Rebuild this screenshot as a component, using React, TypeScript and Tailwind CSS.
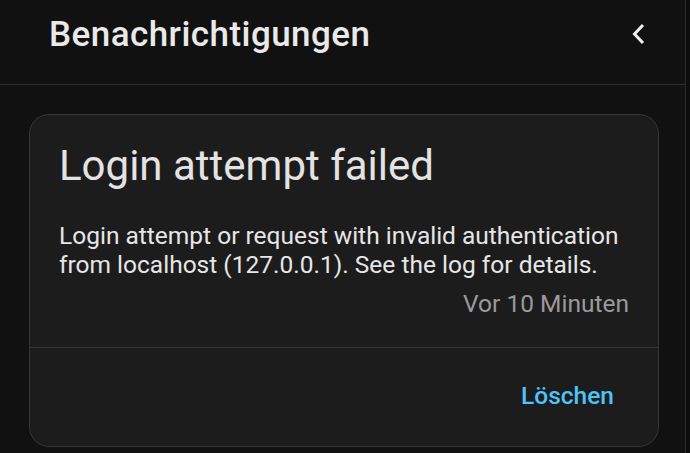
export default function App() {
  return (
    <div
      className="flex h-[453px] w-[690px] overflow-hidden bg-[#111111] text-[#e1e1e1]"
      style={{ fontFamily: "Roboto, 'Noto Sans', sans-serif" }}
    >
      <div className="flex w-[685px] flex-col">
        <header className="flex h-[85px] items-start justify-between border-b border-[#2f2f2f] pl-[49px] pr-[40px]">
          <h1 className="pt-[15px] text-[35px] leading-[40px] font-medium tracking-[0.45px] text-[#e9e9e9]">
            Benachrichtigungen
          </h1>
          <button className="mt-[23px] text-[#f0f0f0]">
            <svg width="14" height="22" viewBox="0 0 14 22" fill="none">
              <path
                d="M12 2 L3.5 11 L12 20"
                stroke="currentColor"
                strokeWidth="3"
              />
            </svg>
          </button>
        </header>

        <div className="pl-[29px] pr-[26px] pt-[29px]">
          <div className="flex h-[333px] flex-col rounded-[20px] border border-[#363636] bg-[#1c1c1c]">
            <div className="pl-[29px] pr-[29px] pt-[27px]">
              <h2 className="text-[42px] leading-[48px] text-[#e3e3e3]">
                Login attempt failed
              </h2>
              <p className="mt-[31px] text-[24.5px] leading-[29px] text-[#e6e6e6]">
                Login attempt or request with invalid authentication
                <br />
                from localhost (127.0.0.1). See the log for details.
              </p>
              <div className="mt-[9px] text-right text-[24.5px] leading-[32px] text-[#9a9a9a]">
                Vor 10 Minuten
              </div>
            </div>
            <div className="mt-[27px] border-t border-[#353535]" />
            <div className="flex flex-1 items-center justify-end pr-[44px] pb-[2px]">
              <button className="text-[24.5px] font-medium text-[#4fc3f7]">Löschen</button>
            </div>
          </div>
        </div>
      </div>
      <div className="w-px bg-[#2a2a2a]" />
      <div className="flex-1 bg-[#0c0c0c]" />
    </div>
  );
}
